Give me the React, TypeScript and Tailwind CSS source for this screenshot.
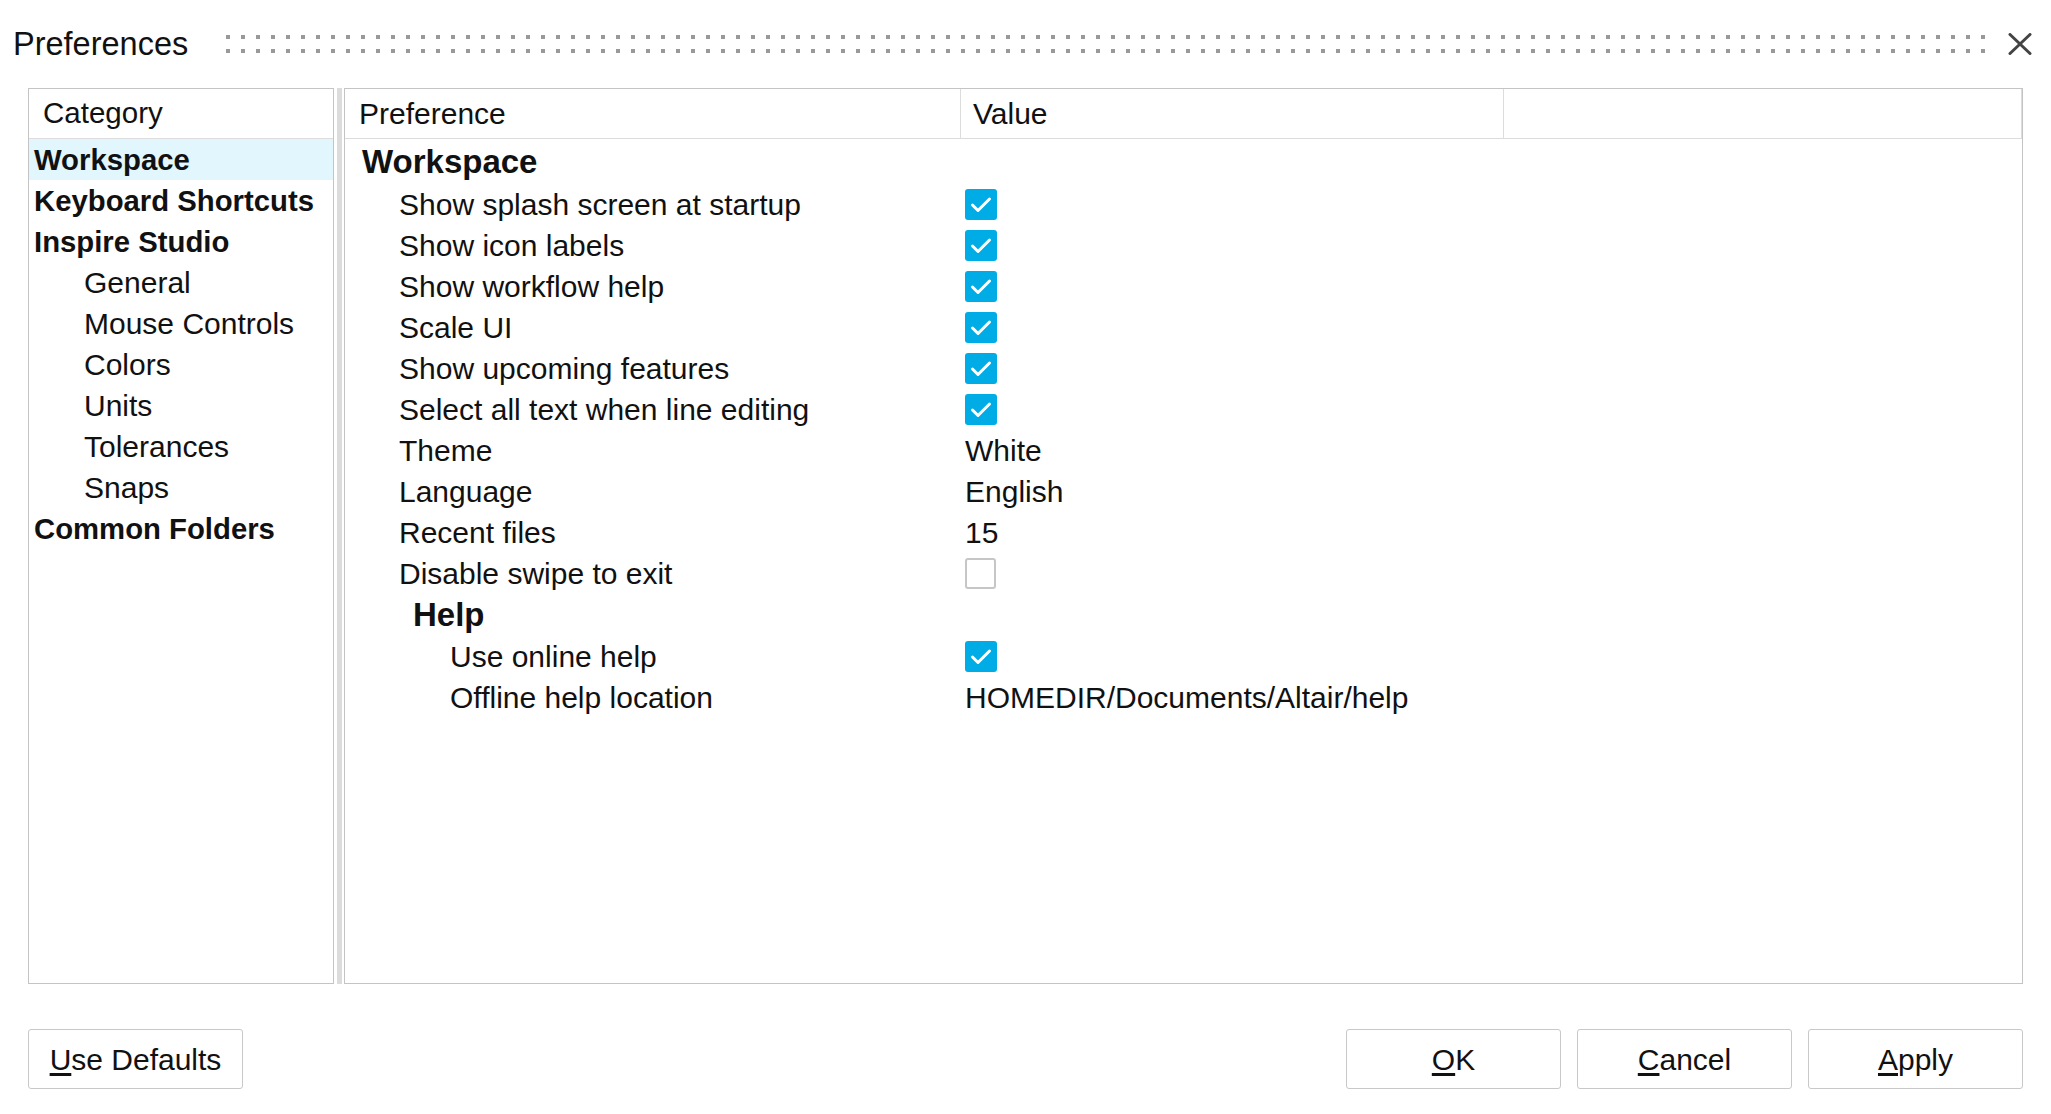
import { ReactNode } from "react";

type Row =
  | { kind: "group"; label: string; indent: number; height: number }
  | { kind: "check"; label: string; indent: number; checked: boolean }
  | { kind: "text"; label: string; indent: number; value: string };

const categories = [
  { label: "Workspace", top: true, selected: true },
  { label: "Keyboard Shortcuts", top: true },
  { label: "Inspire Studio", top: true },
  { label: "General" },
  { label: "Mouse Controls" },
  { label: "Colors" },
  { label: "Units" },
  { label: "Tolerances" },
  { label: "Snaps" },
  { label: "Common Folders", top: true },
];

const rows: Row[] = [
  { kind: "group", label: "Workspace", indent: 17, height: 45 },
  { kind: "check", label: "Show splash screen at startup", indent: 54, checked: true },
  { kind: "check", label: "Show icon labels", indent: 54, checked: true },
  { kind: "check", label: "Show workflow help", indent: 54, checked: true },
  { kind: "check", label: "Scale UI", indent: 54, checked: true },
  { kind: "check", label: "Show upcoming features", indent: 54, checked: true },
  { kind: "check", label: "Select all text when line editing", indent: 54, checked: true },
  { kind: "text", label: "Theme", indent: 54, value: "White" },
  { kind: "text", label: "Language", indent: 54, value: "English" },
  { kind: "text", label: "Recent files", indent: 54, value: "15" },
  { kind: "check", label: "Disable swipe to exit", indent: 54, checked: false },
  { kind: "group", label: "Help", indent: 68, height: 42 },
  { kind: "check", label: "Use online help", indent: 105, checked: true },
  { kind: "text", label: "Offline help location", indent: 105, value: "HOMEDIR/Documents/Altair/help" },
];

function Checkbox({ checked }: { checked: boolean }) {
  if (!checked) {
    return <div className="w-[31px] h-[31px] rounded-[3px] border-2 border-[#c6c6c6] bg-white" />;
  }
  return (
    <div className="w-[32px] h-[31px] rounded-[3px] bg-[#00ace6] flex items-center justify-center">
      <svg width="32" height="31" viewBox="0 0 32 31">
        <path
          d="M7.5 16 L13 21.5 L24.5 10"
          fill="none"
          stroke="white"
          strokeWidth="3"
          strokeLinecap="round"
          strokeLinejoin="round"
        />
      </svg>
    </div>
  );
}

function DialogButton({ mnemonic, rest }: { mnemonic: string; rest: string }) {
  return (
    <button className="w-[215px] h-[60px] border border-[#c8c8c8] rounded-[3px] bg-white text-[30px] text-[#111] flex items-center justify-center">
      <span>
        <span className="underline underline-offset-[3px]">{mnemonic}</span>
        {rest}
      </span>
    </button>
  );
}

function GripDots() {
  return (
    <div className="flex-1 flex flex-col gap-[10px] ml-[38px]">
      <div className="h-[4px] bg-[linear-gradient(to_right,#999999_4px,transparent_4px)] bg-[length:15px_4px]" />
      <div className="h-[4px] bg-[linear-gradient(to_right,#999999_4px,transparent_4px)] bg-[length:15px_4px]" />
    </div>
  );
}

function PrefRow({ row }: { row: Row }): ReactNode {
  if (row.kind === "group") {
    return (
      <div
        className="flex items-center font-bold text-[33px]"
        style={{ height: row.height, paddingLeft: row.indent }}
      >
        {row.label}
      </div>
    );
  }
  return (
    <div className="flex items-center h-[41px] text-[30px]">
      <div className="w-[616px] shrink-0" style={{ paddingLeft: row.indent }}>
        {row.label}
      </div>
      <div className="pl-[4px] flex items-center">
        {row.kind === "check" ? <Checkbox checked={row.checked} /> : row.value}
      </div>
    </div>
  );
}

export default function App() {
  return (
    <div className="w-[2051px] h-[1114px] bg-white text-[#111] flex flex-col overflow-hidden font-['Liberation_Sans',Arial,sans-serif] leading-normal">
      {/* Title bar */}
      <div className="h-[88px] flex items-center pl-[13px] pr-[19px] shrink-0">
        <span className="text-[32.5px]">Preferences</span>
        <GripDots />
        <svg className="ml-[21px]" width="24" height="22" viewBox="0 0 24 22">
          <path d="M2 1.5 L22 20.5 M22 1.5 L2 20.5" stroke="#444" strokeWidth="3" strokeLinecap="round" />
        </svg>
      </div>

      {/* Panels */}
      <div className="h-[896px] flex pl-[28px] pr-[28px] shrink-0">
        {/* Category */}
        <div className="w-[306px] border border-[#c4c4c4] flex flex-col">
          <div className="h-[50px] border-b border-[#dcdcdc] flex items-center pl-[14px] text-[29.5px] shrink-0">
            Category
          </div>
          {categories.map((c) => (
            <div
              key={c.label}
              className={`h-[41px] flex items-center ${c.top ? "font-bold pl-[5px] text-[29.3px]" : "pl-[55px] text-[30px]"} ${c.selected ? "bg-[#e1f6fd]" : ""}`}
            >
              {c.label}
            </div>
          ))}
        </div>

        {/* Splitter */}
        <div className="w-[10px] flex justify-center pl-[1px]">
          <div className="w-[5px] bg-[#dcdcdc]" />
        </div>

        {/* Preferences table */}
        <div className="flex-1 border border-[#c4c4c4] flex flex-col">
          <div className="h-[50px] border-b border-[#dcdcdc] flex text-[30px] shrink-0">
            <div className="w-[616px] flex items-center pl-[14px] border-r border-[#dcdcdc]">Preference</div>
            <div className="w-[543px] flex items-center pl-[12px] border-r border-[#dcdcdc]">Value</div>
            <div className="flex-1 border-r border-[#dcdcdc]" />
          </div>
          {rows.map((r, i) => (
            <PrefRow key={i} row={r} />
          ))}
        </div>
      </div>

      {/* Footer */}
      <div className="flex-1 flex items-start justify-between pt-[45px] pl-[28px] pr-[28px]">
        <DialogButton mnemonic="U" rest="se Defaults" />
        <div className="flex gap-[16px]">
          <DialogButton mnemonic="O" rest="K" />
          <DialogButton mnemonic="C" rest="ancel" />
          <DialogButton mnemonic="A" rest="pply" />
        </div>
      </div>
    </div>
  );
}
